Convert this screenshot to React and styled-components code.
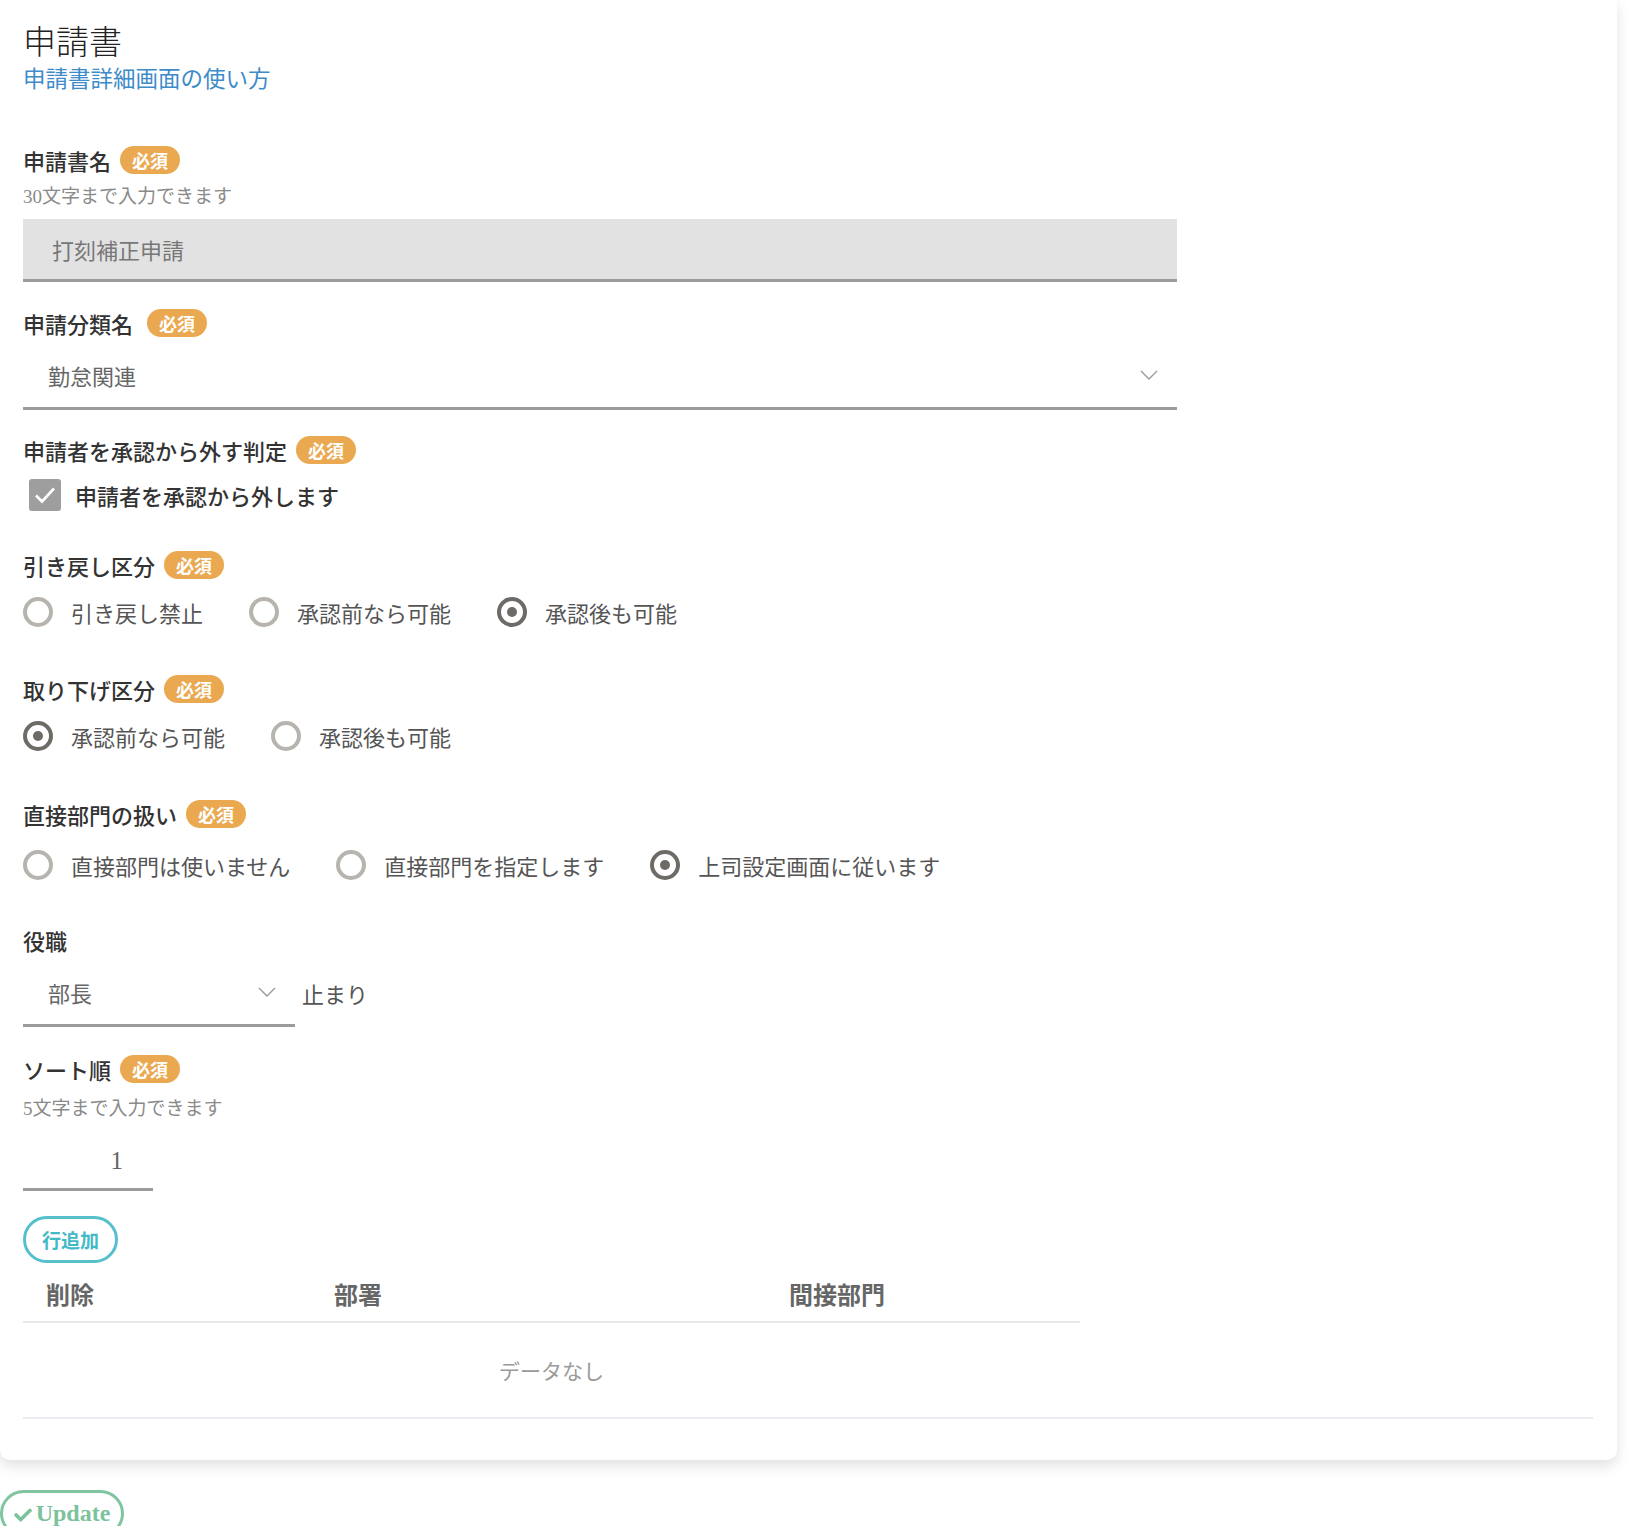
import styled, { createGlobalStyle } from "styled-components";

const GlobalStyle = createGlobalStyle`
  body {
    margin: 0;
    background: #ffffff;
    font-family: "Liberation Serif", "Noto Sans CJK JP", serif;
    color: #333;
  }
`;

function Badge() {
  return <Required>必須</Required>;
}

function Chevron() {
  return (
    <svg width="18" height="10" viewBox="0 0 18 10">
      <polyline points="1,1 9,9 17,1" fill="none" stroke="#9a9a9a" strokeWidth="1.4" />
    </svg>
  );
}

function Radio({ checked, label }) {
  return (
    <RadioItem>
      <RadioCircle checked={checked} />
      <RadioLabel>{label}</RadioLabel>
    </RadioItem>
  );
}

function RadioGroup({ options, value, top }) {
  return (
    <RadioRow top={top}>
      {options.map((o) => (
        <Radio key={o} label={o} checked={o === value} />
      ))}
    </RadioRow>
  );
}

export default function App() {
  return (
    <>
      <GlobalStyle />
      <Card>
        <Title>申請書</Title>
        <HelpLink>申請書詳細画面の使い方</HelpLink>

        <LabelRow top={50}>
          <Label>申請書名</Label>
          <Badge />
        </LabelRow>
        <Hint top={10}>30文字まで入力できます</Hint>
        <FilledInput>打刻補正申請</FilledInput>

        <LabelRow top={25}>
          <Label space={5}>申請分類名</Label>
          <Badge />
        </LabelRow>
        <Select width={1154}>
          <span>勤怠関連</span>
          <Chevron />
        </Select>

        <LabelRow top={24}>
          <Label>申請者を承認から外す判定</Label>
          <Badge />
        </LabelRow>
        <CheckRow>
          <CheckBox>
            <svg width="26" height="26" viewBox="0 0 26 26">
              <polyline points="4,13.5 10,19.5 22,6.5" fill="none" stroke="#fff" strokeWidth="2.6" />
            </svg>
          </CheckBox>
          <CheckLabel>申請者を承認から外します</CheckLabel>
        </CheckRow>

        <LabelRow top={38}>
          <Label>引き戻し区分</Label>
          <Badge />
        </LabelRow>
        <RadioGroup
          top={16}
          options={["引き戻し禁止", "承認前なら可能", "承認後も可能"]}
          value="承認後も可能"
        />

        <LabelRow top={45}>
          <Label>取り下げ区分</Label>
          <Badge />
        </LabelRow>
        <RadioGroup top={16} options={["承認前なら可能", "承認後も可能"]} value="承認前なら可能" />

        <LabelRow top={46}>
          <Label>直接部門の扱い</Label>
          <Badge />
        </LabelRow>
        <RadioGroup
          top={20}
          options={["直接部門は使いません", "直接部門を指定します", "上司設定画面に従います"]}
          value="上司設定画面に従います"
        />

        <LabelRow top={43}>
          <Label>役職</Label>
        </LabelRow>
        <InlineRow>
          <Select width={272}>
            <span>部長</span>
            <Chevron />
          </Select>
          <Suffix>止まり</Suffix>
        </InlineRow>

        <LabelRow top={26}>
          <Label>ソート順</Label>
          <Badge />
        </LabelRow>
        <Hint top={13}>5文字まで入力できます</Hint>
        <NumberInput>1</NumberInput>

        <AddButton>行追加</AddButton>

        <Table>
          <colgroup>
            <col style={{ width: 288 }} />
            <col style={{ width: 455 }} />
            <col style={{ width: 314 }} />
          </colgroup>
          <thead>
            <tr>
              <Th>削除</Th>
              <Th>部署</Th>
              <Th>間接部門</Th>
            </tr>
          </thead>
          <tbody>
            <tr>
              <EmptyCell colSpan={3}>データなし</EmptyCell>
            </tr>
          </tbody>
        </Table>
        <Divider />
      </Card>

      <UpdateButton>
        <svg width="18" height="16" viewBox="0 0 512 448">
          <path
            fill="#7cc29c"
            d="M173.9 439.4L7.5 273c-10-10-10-26.2 0-36.2l36.2-36.2c10-10 26.2-10 36.2 0L192 312.7 432.1 72.6c10-10 26.2-10 36.2 0l36.2 36.2c10 10 10 26.2 0 36.2L210.1 439.4c-10 10-26.2 10-36.2 0z"
          />
        </svg>
        Update
      </UpdateButton>
    </>
  );
}

const Card = styled.div`
  width: 1617px;
  box-sizing: border-box;
  padding: 24px 24px 41px 23px;
  background: #fff;
  border-radius: 0 0 10px 10px;
  box-shadow: 0 6px 14px rgba(0, 0, 0, 0.12);
  display: flex;
  flex-direction: column;
  align-items: flex-start;
`;

const Title = styled.h1`
  margin: 0;
  font-size: 33px;
  line-height: 38px;
  font-weight: 300;
  color: #222;
`;

const HelpLink = styled.a`
  margin-top: 4px;
  font-size: 22.5px;
  line-height: 28px;
  color: #3d8bc9;
  cursor: pointer;
`;

const LabelRow = styled.div`
  margin-top: ${(p) => p.top}px;
  height: 31px;
  display: flex;
  align-items: center;
  gap: 9px;
`;

const Label = styled.span`
  margin-right: ${(p) => p.space || 0}px;
  font-size: 22px;
  font-weight: 500;
  color: #333;
`;

const Required = styled.span`
  display: inline-flex;
  align-items: center;
  height: 28px;
  padding: 0 12px;
  border-radius: 14px;
  background: #eaa951;
  color: #fff;
  font-size: 18px;
  font-weight: 700;
`;

const Hint = styled.div`
  margin-top: ${(p) => p.top}px;
  font-size: 19px;
  line-height: 24px;
  color: #8a8a8a;
`;

const FilledInput = styled.div`
  margin-top: 10px;
  width: 1154px;
  height: 63px;
  box-sizing: border-box;
  padding-left: 29px;
  display: flex;
  align-items: center;
  background: #e2e2e2;
  border-bottom: 3px solid #9b9b9b;
  font-size: 22px;
  color: #777;
`;

const Select = styled.div`
  margin-top: 9px;
  width: ${(p) => p.width}px;
  height: 63px;
  box-sizing: border-box;
  padding: 0 19px 4px 25px;
  display: flex;
  align-items: center;
  justify-content: space-between;
  border-bottom: 3px solid #9b9b9b;
  font-size: 22px;
  color: #666;
`;

const InlineRow = styled.div`
  display: flex;
  align-items: center;
`;

const Suffix = styled.span`
  margin: 4px 0 0 7px;
  font-size: 22px;
  color: #555;
`;

const CheckRow = styled.div`
  margin-top: 14px;
  padding-left: 6px;
  display: flex;
  align-items: center;
  gap: 14px;
`;

const CheckBox = styled.span`
  width: 32px;
  height: 32px;
  border-radius: 3px;
  background: #9e9e9e;
  display: flex;
  align-items: center;
  justify-content: center;
`;

const CheckLabel = styled.span`
  font-size: 22px;
  font-weight: 500;
  color: #333;
`;

const RadioRow = styled.div`
  margin-top: ${(p) => p.top}px;
  display: flex;
  align-items: center;
`;

const RadioItem = styled.label`
  display: flex;
  align-items: center;
  margin-right: 46px;
`;

const RadioCircle = styled.span`
  position: relative;
  width: 30px;
  height: 30px;
  box-sizing: border-box;
  border-radius: 50%;
  border: 4px solid ${(p) => (p.checked ? "#6e6a65" : "#b7b3ae")};

  &::after {
    content: "";
    display: ${(p) => (p.checked ? "block" : "none")};
    position: absolute;
    left: 50%;
    top: 50%;
    width: 10px;
    height: 10px;
    margin: -5px 0 0 -5px;
    border-radius: 50%;
    background: #6e6a65;
  }
`;

const RadioLabel = styled.span`
  margin-left: 18px;
  font-size: 22px;
  color: #555;
`;

const NumberInput = styled.div`
  margin-top: 12px;
  width: 130px;
  height: 58px;
  box-sizing: border-box;
  padding-right: 30px;
  display: flex;
  align-items: center;
  justify-content: flex-end;
  border-bottom: 3px solid #9b9b9b;
  font-size: 25px;
  color: #666;
`;

const AddButton = styled.button`
  margin-top: 25px;
  height: 47px;
  padding: 0 16px;
  border: 3px solid #55c0cc;
  border-radius: 24px;
  background: #fff;
  color: #43b8c7;
  font-family: "Noto Sans CJK JP", sans-serif;
  font-size: 19px;
  font-weight: 700;
`;

const Table = styled.table`
  margin-top: 3px;
  width: 1057px;
  border-collapse: collapse;
  table-layout: fixed;
`;

const Th = styled.th`
  height: 55px;
  padding: 0 0 0 23px;
  text-align: left;
  font-size: 24px;
  font-weight: 700;
  color: #666;
  border-bottom: 2px solid #e8e8ec;
`;

const EmptyCell = styled.td`
  height: 92px;
  text-align: center;
  font-size: 21px;
  color: #9a9a9a;
`;

const Divider = styled.div`
  align-self: stretch;
  height: 2px;
  background: #e9edf2;
`;

const UpdateButton = styled.button`
  margin-top: 30px;
  height: 47px;
  width: 124px;
  display: flex;
  align-items: center;
  justify-content: center;
  gap: 4px;
  border: 3px solid #80c4a0;
  border-radius: 24px;
  background: #fff;
  color: #7cc29c;
  font-family: "Liberation Serif", serif;
  font-size: 24px;
  font-weight: 700;
`;
